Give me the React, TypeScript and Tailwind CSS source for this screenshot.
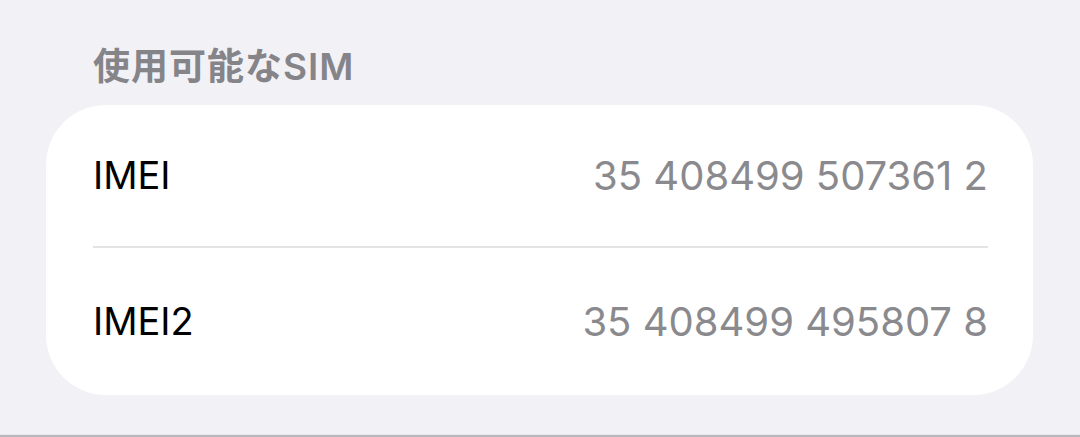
export default function App() {
  const font = { fontFamily: 'Inter, "Noto Sans CJK JP", sans-serif' };
  return (
    <div className="w-[1080px] h-[437px] bg-[#f2f1f6] flex flex-col overflow-hidden" style={font}>
      <div className="h-[105px] pl-[93px] pt-[43px] text-[37px] tracking-[1px] font-semibold text-[#848489] leading-[48px]">
        使用可能なSIM
      </div>
      <div className="mx-[46px] mr-[47px] h-[290px] bg-white rounded-[60px] flex flex-col px-[47px] pr-[45px]">
        <div className="h-[143px] flex items-center justify-between border-b-2 border-[#e4e4e7]">
          <span className="text-[38px] text-black">IMEI</span>
          <span className="text-[40px] text-[#8a8a8e]">35 408499 507361 2</span>
        </div>
        <div className="flex-1 flex items-center justify-between">
          <span className="text-[38px] text-black">IMEI2</span>
          <span className="text-[40px] text-[#8a8a8e]">35 408499 495807 8</span>
        </div>
      </div>
      <div className="flex-1" />
      <div className="h-px bg-[#e8e8ec]" />
      <div className="h-[2px] bg-[#b9b9bc]" />
    </div>
  );
}
